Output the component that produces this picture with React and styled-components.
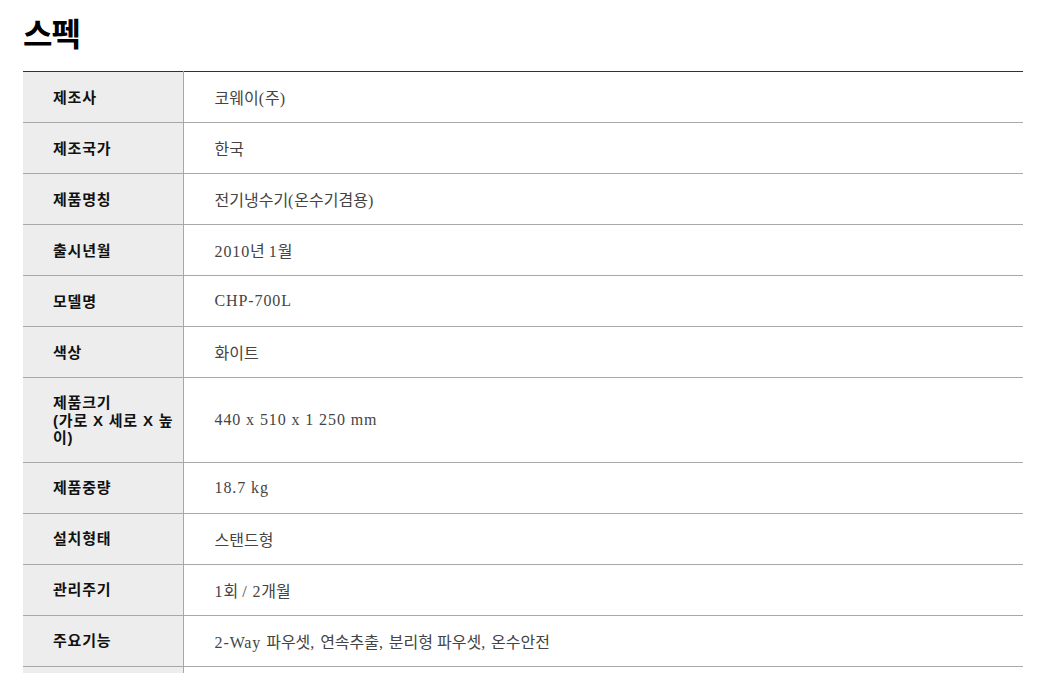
import React from "react";
import styled, { createGlobalStyle } from "styled-components";

const Global = createGlobalStyle`
  html, body { margin: 0; padding: 0; background: #fff; }
  body { font-family: "Noto Sans CJK KR", "Noto Sans", sans-serif; }
`;

const Page = styled.div`
  padding: 12px 17px 0 23px;
  width: 1000px;
`;

const Title = styled.h2`
  margin: 0 0 19px;
  font-size: 32px;
  line-height: 40px;
  font-weight: 700;
  color: #000;
  letter-spacing: -1px;
`;

const Table = styled.table`
  width: 1000px;
  border-collapse: collapse;
  border-top: 1px solid #333;
  table-layout: fixed;
`;

const Th = styled.th`
  width: 160px;
  box-sizing: border-box;
  background: #ededed;
  border-bottom: 1px solid #a8a8a8;
  border-right: 1px solid #a8a8a8;
  padding: 16px 0 15px 30px;
  height: 51px;
  text-align: left;
  font-family: "Liberation Sans", "Noto Sans CJK KR", sans-serif;
  font-size: 15px;
  line-height: 17.5px;
  letter-spacing: 0.8px;
  font-weight: 700;
  color: #111;
  vertical-align: middle;
  white-space: pre-line;
`;

const Td = styled.td`
  border-bottom: 1px solid #a8a8a8;
  padding: 12px 30px 12px 31px;
  font-family: "Liberation Serif", "Noto Sans CJK KR", serif;
  font-size: 16px;
  font-weight: 400;
  color: #444;
  vertical-align: middle;
`;

const Latin = styled.span`
  letter-spacing: 0.9px;
`;

const rows = [
  ["제조사", "코웨이(주)"],
  ["제조국가", "한국"],
  ["제품명칭", "전기냉수기(온수기겸용)"],
  ["출시년월", "2010년 1월"],
  ["모델명", "CHP-700L"],
  ["색상", "화이트"],
  ["제품크기\n(가로 X 세로 X 높\n이)", "440 x 510 x 1 250 mm"],
  ["제품중량", "18.7 kg"],
  ["설치형태", "스탠드형"],
  ["관리주기", "1회 / 2개월"],
  ["주요기능", "2-Way 파우셋, 연속추출, 분리형 파우셋, 온수안전"],
  ["", ""],
];

function Value({ text }) {
  const parts = text.split(/([\x21-\x7E][\x20-\x7E]*)/);
  return parts.map((p, i) =>
    /[\x21-\x7E]/.test(p) ? <Latin key={i}>{p}</Latin> : <React.Fragment key={i}>{p}</React.Fragment>
  );
}

export default function App() {
  return (
    <Page>
      <Global />
      <Title>스펙</Title>
      <Table>
        <tbody>
          {rows.map(([k, v], i) => (
            <tr key={i}>
              <Th>{k}</Th>
              <Td>
                <Value text={v} />
              </Td>
            </tr>
          ))}
        </tbody>
      </Table>
    </Page>
  );
}
